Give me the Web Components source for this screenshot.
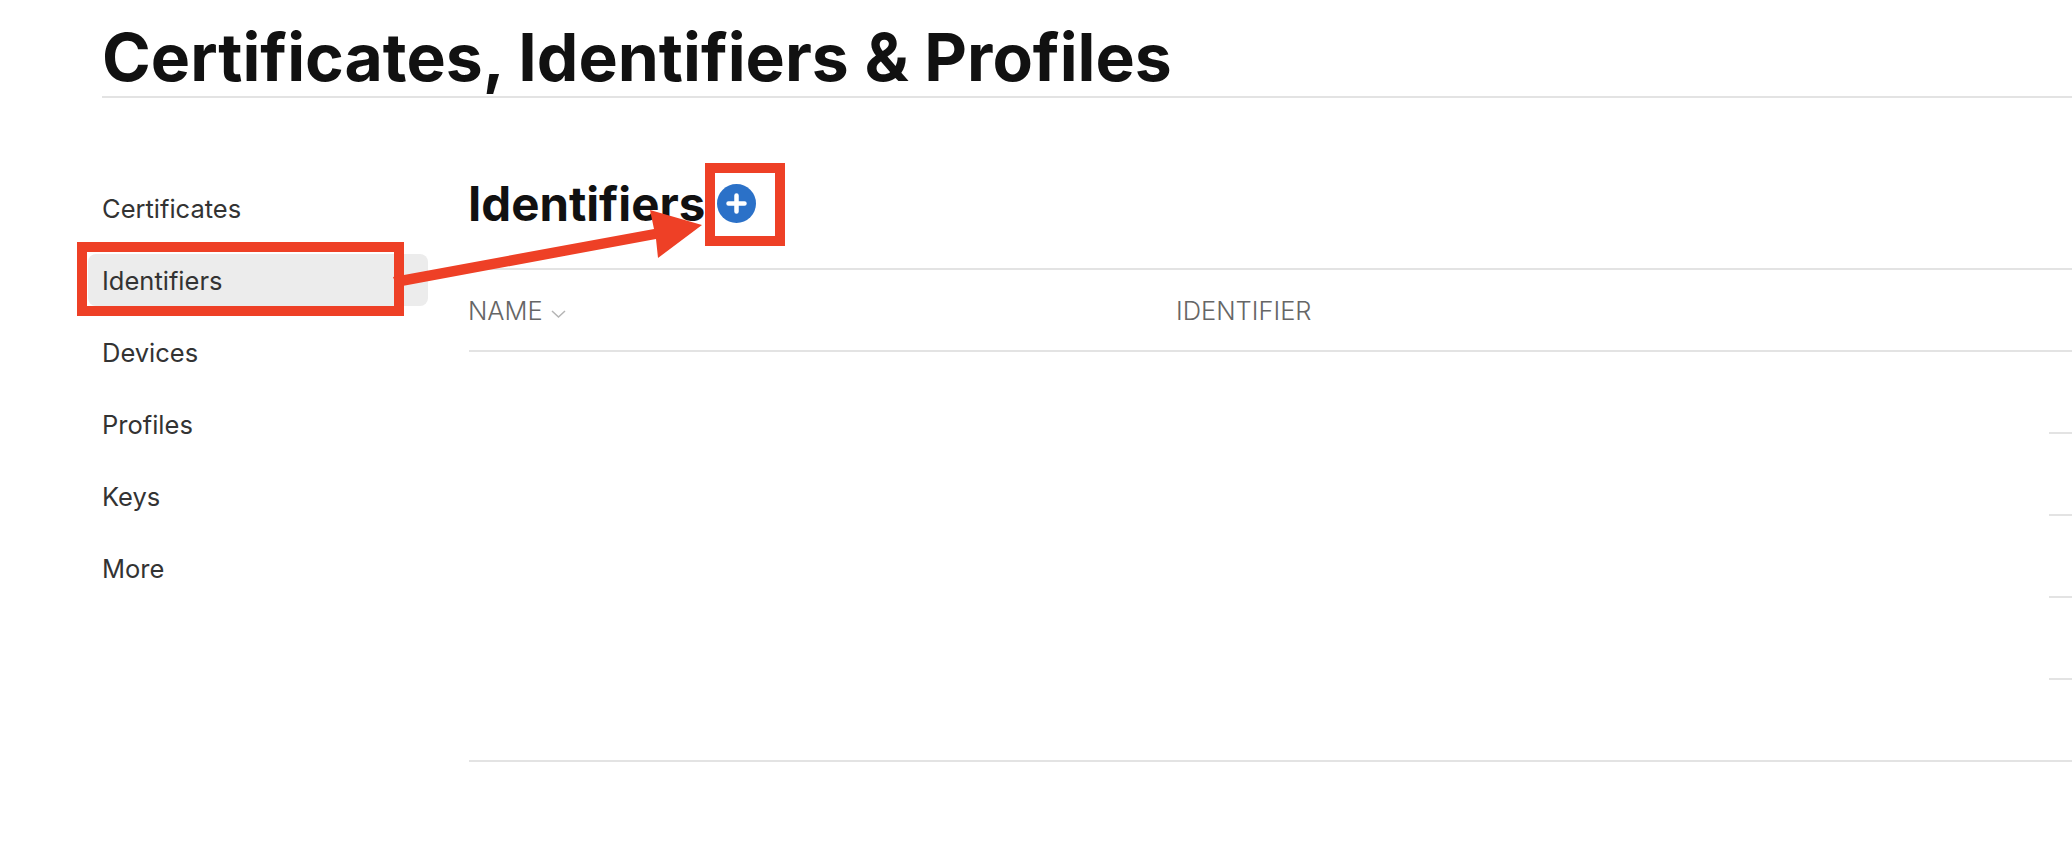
<!DOCTYPE html>
<html lang="en">
<head>
<meta charset="utf-8">
<title>Certificates, Identifiers & Profiles</title>
<style>
  html, body { margin: 0; height: 100%; background: #fff; overflow: hidden; }
  body { font-family: Inter, "Liberation Sans", sans-serif; }
</style>
</head>
<body>
<dev-page>
  <span slot="title">Certificates, Identifiers &amp; Profiles</span>
  <side-nav slot="nav">
    <nav-item>Certificates</nav-item>
    <nav-item active>Identifiers</nav-item>
    <nav-item>Devices</nav-item>
    <nav-item>Profiles</nav-item>
    <nav-item>Keys</nav-item>
    <nav-item>More</nav-item>
  </side-nav>
  <id-list slot="content" heading="Identifiers"></id-list>
</dev-page>
<callout-layer></callout-layer>

<script>
class DevPage extends HTMLElement {
  constructor() {
    super();
    this.attachShadow({mode: 'open'}).innerHTML = `
      <style>
        :host { display: block; }
        .title {
          margin: 0 0 0 102px;
          height: 96px;
          border-bottom: 2px solid #e3e3e3;
          font-size: 66px;
          line-height: 114px;
          font-weight: 700;
          color: #111;
          white-space: nowrap;
        }
        .body {
          display: grid;
          grid-template-columns: 326px 1fr;
          column-gap: 41px;
          margin-left: 102px;
        }
      </style>
      <h1 class="title"><slot name="title"></slot></h1>
      <div class="body">
        <slot name="nav"></slot>
        <slot name="content"></slot>
      </div>
    `;
  }
}

class SideNav extends HTMLElement {
  constructor() {
    super();
    this.attachShadow({mode: 'open'}).innerHTML = `
      <style>
        :host { display: flex; flex-direction: column; gap: 20px; padding-top: 84px; margin-left: -14px; }
      </style>
      <slot></slot>
    `;
  }
}

class NavItem extends HTMLElement {
  constructor() {
    super();
    this.attachShadow({mode: 'open'}).innerHTML = `
      <style>
        :host {
          display: block;
          height: 52px;
          line-height: 54px;
          padding-left: 14px;
          border-radius: 8px;
          font-size: 25.5px;
          color: #333;
        }
        :host([active]) { background: #ececec; }
      </style>
      <slot></slot>
    `;
  }
}

class IdList extends HTMLElement {
  constructor() {
    super();
    const rows = '<div class="row"></div>'.repeat(4);
    this.attachShadow({mode: 'open'}).innerHTML = `
      <style>
        :host { display: block; }
        .head {
          display: flex;
          align-items: center;
          height: 172px;
          gap: 12px;
          padding-top: 40px;
          box-sizing: border-box;
          border-bottom: 2px solid #e3e3e3;
        }
        h2 { margin: 0 0 0 -1px; font-size: 47.4px; font-weight: 700; color: #111; }
        .add { width: 39px; height: 39px; display: block; }
        .cols {
          display: grid;
          grid-template-columns: 707px 1fr;
          align-items: center;
          height: 80px;
          border-bottom: 2px solid #e3e3e3;
          font-size: 25.5px;
          font-weight: 300;
          color: #666;
        }
        .name { margin-left: -1px; }
        .cols svg { width: 15px; height: 8px; margin-left: 8px; vertical-align: 2px; }
        .row { height: 80px; border-bottom: 2px solid; border-image: linear-gradient(to left, #e3e3e3 24px, transparent 24px) 1; }
        .foot { height: 80px; border-bottom: 2px solid #e3e3e3; }
      </style>
      <div class="head">
        <h2>${this.getAttribute('heading')}</h2>
        <svg class="add" viewBox="0 0 39 39">
          <circle cx="19.5" cy="19.5" r="19.5" fill="#2b71c8"/>
          <path d="M19.5 11.5v16M11.5 19.5h16" stroke="#fff" stroke-width="4.5" stroke-linecap="round"/>
        </svg>
      </div>
      <div class="cols">
        <div class="name">NAME<svg viewBox="0 0 15 8"><path d="M1 1l6.5 6L14 1" fill="none" stroke="#b5b5b5" stroke-width="1.5"/></svg></div>
        <div>IDENTIFIER</div>
      </div>
      ${rows}
      <div class="foot"></div>
    `;
  }
}

// annotation drawn over the page, red boxes and the arrow between them
class CalloutLayer extends HTMLElement {
  constructor() {
    super();
    this.attachShadow({mode: 'open'}).innerHTML = `
      <style>
        :host { position: absolute; inset: 0; display: block; pointer-events: none; }
        svg { display: block; width: 100%; height: 100%; }
      </style>
      <svg viewBox="0 0 2072 860">
        <g fill="none" stroke="#ee4026" stroke-width="10">
          <rect x="82" y="247" width="317" height="64"/>
          <rect x="710" y="168" width="70" height="73"/>
        </g>
        <polygon fill="#ee4026" points="393,277 654,229 650,210 702,225 658,258 656,239 397,287"/>
      </svg>
    `;
  }
}

customElements.define('dev-page', DevPage);
customElements.define('side-nav', SideNav);
customElements.define('nav-item', NavItem);
customElements.define('id-list', IdList);
customElements.define('callout-layer', CalloutLayer);
</script>
</body>
</html>
